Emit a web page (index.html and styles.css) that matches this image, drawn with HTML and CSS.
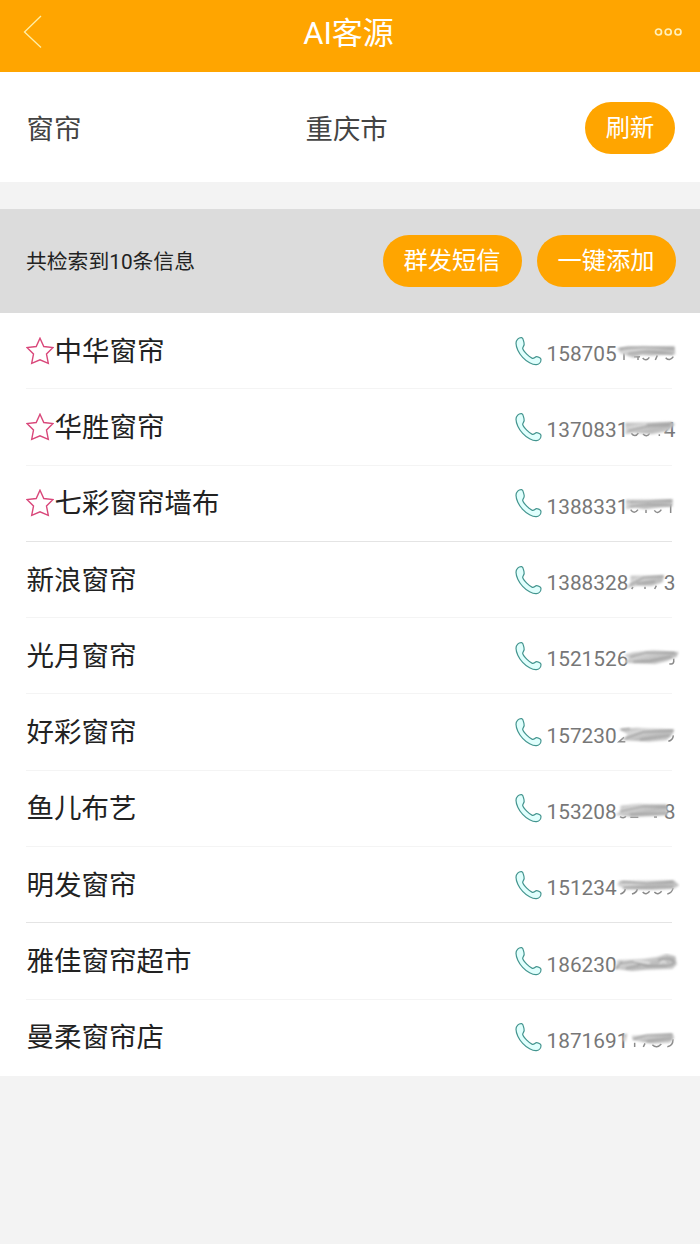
FILE: index.html
```html
<!DOCTYPE html>
<html lang="zh-CN">
<head>
<meta charset="utf-8">
<title>AI客源</title>
<link rel="stylesheet" href="styles.css">
</head>
<body>
<svg class="defs" width="0" height="0" aria-hidden="true">
  <defs>
    <filter id="soft" x="-20%" y="-40%" width="140%" height="180%"><feGaussianBlur stdDeviation="3.6"/></filter>
    <filter id="faint" x="-20%" y="-40%" width="140%" height="180%"><feGaussianBlur stdDeviation="2.6"/></filter>
    <linearGradient id="smear" x1="0" y1="0" x2="1" y2="1">
      <stop offset="0" stop-color="#b2b2b2"/><stop offset=".3" stop-color="#d8d8d8"/>
      <stop offset=".6" stop-color="#bcbcbc"/><stop offset="1" stop-color="#d2d2d2"/>
    </linearGradient>
    <symbol id="phone" viewBox="42 45 84 90">
      <path d="M62 50C67 51 67 59 69 65C72 74 65 77 65 82C67 91 86 109 94 112C100 114 103 105 108 107C112 108 120 110 120 116C120 124 113 130 106 131C95 132 77 122 65 109C53 97 45 78 45 67C45 57 53 49 62 50Z"/>
    </symbol>
    <symbol id="star" viewBox="0 0 28 28">
      <path d="M14 1.2L17.8 9.5L27 10.6L20.5 17.1L22.3 26.4L14 22.8L5.7 26.4L7.5 17.1L1 10.6L10.2 9.5Z"/>
    </symbol>
  </defs>
</svg>

<header class="topbar">
  <svg class="back" viewBox="0 0 20 34"><path d="M18 1L1.5 17L18 32.5"/></svg>
  <h1 class="title">AI客源</h1>
  <svg class="more" viewBox="0 0 28 10"><circle cx="4.5" cy="5" r="3"/><circle cx="14.2" cy="5" r="3"/><circle cx="24" cy="5" r="3"/></svg>
</header>

<section class="search">
  <span class="keyword">窗帘</span>
  <span class="city">重庆市</span>
  <button class="pill refresh">刷新</button>
</section>

<section class="summary">
  <span class="count">共检索到10条信息</span>
  <button class="pill wide">群发短信</button>
  <button class="pill wide">一键添加</button>
</section>

<main class="list">
  <div class="row">
    <svg class="star"><use href="#star"/></svg><span class="name">中华窗帘</span>
    <svg class="phone"><use href="#phone"/></svg>
    <span class="number"><span>158705</span>
      <svg class="mask" viewBox="330 -12 210 78"><path class="ink" d="M372 20V42M402 32H420M414 30V42M428 36Q438 48 448 34M472 28L466 42M497 35Q509 48 520 32"/><path class="blob" d="M352 6L385 1L524 0L526 25L455 29L425 27L400 35L360 22Z"/><path class="streak" d="M360 9Q410 0 522 8M385 23L440 16L520 24"/></svg></span>
  </div>
  <div class="row">
    <svg class="star"><use href="#star"/></svg><span class="name">华胜窗帘</span>
    <svg class="phone"><use href="#phone"/></svg>
    <span class="number"><span>1370831</span><span>4</span>
      <svg class="mask" viewBox="330 -12 210 78"><path class="ink" d="M394 34Q405 48 415 33M429 36Q440 47 449 34M478 37V42"/><path class="blob" d="M376 2L515 -1L525 7L505 27L455 37L400 32L376 37Z"/><path class="streak" d="M385 26L440 14L510 10M440 8L515 4"/></svg></span>
  </div>
  <div class="row strong">
    <svg class="star"><use href="#star"/></svg><span class="name">七彩窗帘墙布</span>
    <svg class="phone"><use href="#phone"/></svg>
    <span class="number"><span>1388331</span>
      <svg class="mask" viewBox="330 -12 210 78"><path class="ink" d="M392 32Q402 48 414 32M438 32V42M463 34Q473 48 484 32M512 15V42"/><path class="blob" d="M378 2L518 0L518 22L475 26L435 31L405 26L378 30Z"/><path class="streak" d="M390 10L515 5M390 22L445 16L514 20"/></svg></span>
  </div>
  <div class="row">
    <span class="name">新浪窗帘</span>
    <svg class="phone"><use href="#phone"/></svg>
    <span class="number"><span>1388328</span><span>3</span>
      <svg class="mask" viewBox="330 -12 210 78"><path class="ink" d="M399 36L395 42M435 35V42M469 32L464 42"/><path class="blob" d="M392 2L492 0L488 22L455 33L410 32L378 40L391 24Z"/><path class="streak" d="M390 30L430 8L490 4M410 26L465 20"/></svg></span>
  </div>
  <div class="row">
    <span class="name">光月窗帘</span>
    <svg class="phone"><use href="#phone"/></svg>
    <span class="number"><span>1521526</span>
      <svg class="mask" viewBox="330 -12 210 78"><path class="ink" d="M508 38Q524 43 521 23"/><path class="blob" d="M373 11L400 4L460 -3L536 3L530 17L500 31L465 39L405 37L372 35L385 23Z"/><path class="streak" d="M390 18L440 5L525 6M400 32L450 30L515 17"/></svg></span>
  </div>
  <div class="row">
    <span class="name">好彩窗帘</span>
    <svg class="phone"><use href="#phone"/></svg>
    <span class="number"><span>157230</span>
      <svg class="mask" viewBox="330 -12 210 78"><path class="ink" d="M372 28L357 41H376M505 40Q519 36 520 22"/><path class="blob" d="M358 3L410 -1L522 4L518 18L500 37L445 41L400 38L365 37L384 20Z"/><path class="streak" d="M362 5L390 2M376 31L430 12L520 8M420 35L510 22"/></svg></span>
  </div>
  <div class="row">
    <span class="name">鱼儿布艺</span>
    <svg class="phone"><use href="#phone"/></svg>
    <span class="number"><span>153208</span><span>8</span>
      <svg class="mask" viewBox="330 -12 210 78"><path class="ink" d="M360 38Q371 45 378 37M391 40H415M462 39H471"/><path class="blob" d="M362 5L415 -1L500 1L503 34L455 37L400 39L345 33L360 22Z"/><path class="streak" d="M361 22L430 7L500 9M390 31L500 28"/></svg></span>
  </div>
  <div class="row strong">
    <span class="name">明发窗帘</span>
    <svg class="phone"><use href="#phone"/></svg>
    <span class="number"><span>151234</span>
      <svg class="mask" viewBox="330 -12 210 78"><path class="ink" d="M361 42Q374 38 376 27M396 42Q410 38 412 27M428 36Q438 47 449 34M463 36Q474 47 485 34M502 42Q517 38 519 24"/><path class="blob" d="M358 3L520 0L538 16L520 27L455 30L375 28L352 16Z"/><path class="streak" d="M365 5L440 11L520 6M370 23L520 20"/></svg></span>
  </div>
  <div class="row">
    <span class="name">雅佳窗帘超市</span>
    <svg class="phone"><use href="#phone"/></svg>
    <span class="number"><span>186230</span>
      <svg class="mask" viewBox="330 -12 210 78"><path class="blob" d="M352 9L430 5L470 0L500 -10L526 -2L531 22L517 36L440 38L395 42L345 35Z"/><path class="streak" d="M360 20L400 14L440 27L500 27M378 34L420 25M475 9Q510 -2 520 12T485 27M348 36L365 14"/><path class="light" d="M400 10L450 18M480 20Q490 8 498 18"/></svg></span>
  </div>
  <div class="row">
    <span class="name">曼柔窗帘店</span>
    <svg class="phone"><use href="#phone"/></svg>
    <span class="number"><span>1871691</span>
      <svg class="mask" viewBox="330 -12 210 78"><path class="ink" d="M404 29V42M435 31L430 42M457 35Q470 48 484 33M502 41Q519 39 519 19"/><path class="blob" d="M371 4L382 2L378 25L369 25ZM395 8L515 0L523 14L510 29L455 32L398 21Z"/><path class="streak" d="M400 18L440 7L518 5M440 25L515 16"/></svg></span>
  </div>
</main>
</body>
</html>
```
FILE: styles.css
```css
* { box-sizing: border-box; }
body {
  margin: 0;
  background: #f3f3f3;
  color: #222;
  font-family: Roboto, "Noto Sans CJK SC", sans-serif;
}
.defs { position: absolute; }

.topbar {
  display: flex;
  align-items: center;
  justify-content: space-between;
  height: 72px;
  padding: 0 18px 8px 23px;
  background: #ffa500;
}
.back { width: 20px; height: 34px; fill: none; stroke: #fff0a8; stroke-width: 1.3; }
.title { margin: 0; padding-top: 3px; color: #fff; font-size: 31px; font-weight: 400; line-height: 40px; }
.more { width: 28px; height: 10px; fill: none; stroke: #fff0bb; stroke-width: 1.7; }

.search {
  display: grid;
  grid-template-columns: 279px 1fr auto;
  align-items: center;
  height: 110px;
  padding: 1px 25px 0 27px;
  background: #fff;
  color: #444;
  font-size: 27.4px;
}
.keyword, .city { margin-left: -0.5px; padding-bottom: 1px; }

.pill {
  height: 52px;
  padding: 0;
  border: 0;
  border-radius: 26px;
  background: #ffa500;
  color: #fff;
  font: inherit;
  font-size: 24.3px;
  line-height: 50px;
}
.refresh { width: 90px; }
.wide { width: 139px; }

.summary {
  display: flex;
  align-items: center;
  gap: 15px;
  height: 104px;
  margin-top: 27px;
  padding: 0 24.5px 0 26px;
  background: #dcdcdc;
}
.count { flex: 1; padding-bottom: 2px; font-size: 20.8px; }

.list { background: #fff; }
.row {
  display: flex;
  align-items: center;
  height: 76.3px;
  margin: 0 28px 0 26px;
  border-bottom: 1px solid #f4f4f4;
}
.row.strong { border-bottom-color: #e4e4e4; }
.row:last-child { border-bottom-color: transparent; }
.star { width: 28px; height: 28px; fill: none; stroke: #d9477a; stroke-width: 1.4; }
.name { flex: 1; padding: 2px 0 0 0.5px; font-size: 27.5px; line-height: 40px; }
.phone { width: 28px; height: 30px; margin-right: 4px; fill: #e0fffd; stroke: #43958f; stroke-width: 3.6; }
.number {
  position: relative;
  display: flex;
  justify-content: space-between;
  width: 129px;
  margin: 7px -3.5px 0 0;
  color: #777;
  font-size: 20.8px;
  line-height: 26px;
}
.mask { position: absolute; left: 63px; top: 1px; width: 70px; height: 26px; }
.ink { fill: none; stroke: #8a8a8a; stroke-width: 4.5; }
.blob { fill: url(#smear); filter: url(#soft); }
.streak { fill: none; stroke: #9a9a9a; stroke-width: 4; filter: url(#faint); }
.light { fill: none; stroke: #eee; stroke-width: 4; filter: url(#faint); }
```
